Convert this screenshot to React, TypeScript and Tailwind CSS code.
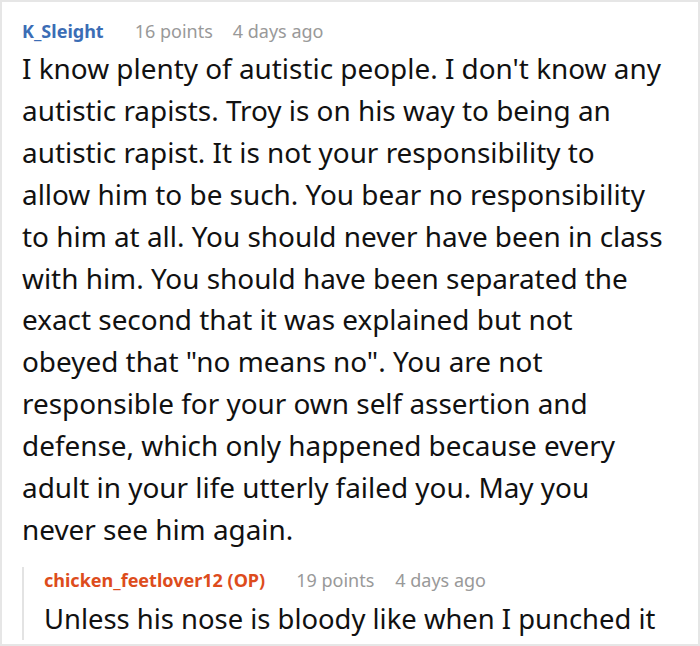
import React from "react";

const lines = [
  "I know plenty of autistic people. I don't know any",
  "autistic rapists. Troy is on his way to being an",
  "autistic rapist. It is not your responsibility to",
  "allow him to be such. You bear no responsibility",
  "to him at all. You should never have been in class",
  "with him. You should have been separated the",
  "exact second that it was explained but not",
  'obeyed that "no means no". You are not',
  "responsible for your own self assertion and",
  "defense, which only happened because every",
  "adult in your life utterly failed you. May you",
  "never see him again.",
];

export default function App() {
  return (
    <div className="w-[700px] h-[646px] bg-white border-2 border-[#e6e6e6] overflow-hidden" style={{ fontFamily: '"Noto Sans", sans-serif' }}>
      <div className="pl-[20px] pt-[16px] pr-[4px]">
        <div className="flex items-baseline text-[18px] leading-[26px]">
          <span className="font-bold text-[#3b6db5]">K_Sleight</span>
          <span className="ml-[31px] text-[#999999]">16 points</span>
          <span className="ml-[20px] text-[#999999]">4 days ago</span>
        </div>
        <p className="text-[27.9px] leading-[41.9px] text-[#111111] mt-[4px] whitespace-nowrap">
          {lines.map((l, i) => (
            <span key={i} className="block">{l}</span>
          ))}
        </p>
        <div className="mt-[16px] border-l-2 border-[#e3e3e3] pl-[20px]">
          <div className="flex items-baseline text-[18px] leading-[26px]">
            <span className="font-bold text-[#dd4c1c]">chicken_feetlover12 (OP)</span>
            <span className="ml-[31px] text-[#999999]">19 points</span>
            <span className="ml-[21px] text-[#999999]">4 days ago</span>
          </div>
          <p className="mt-[5px] text-[27.4px] leading-[41.8px] text-[#111111] whitespace-nowrap">
            Unless his nose is bloody like when I punched it
          </p>
        </div>
      </div>
    </div>
  );
}
